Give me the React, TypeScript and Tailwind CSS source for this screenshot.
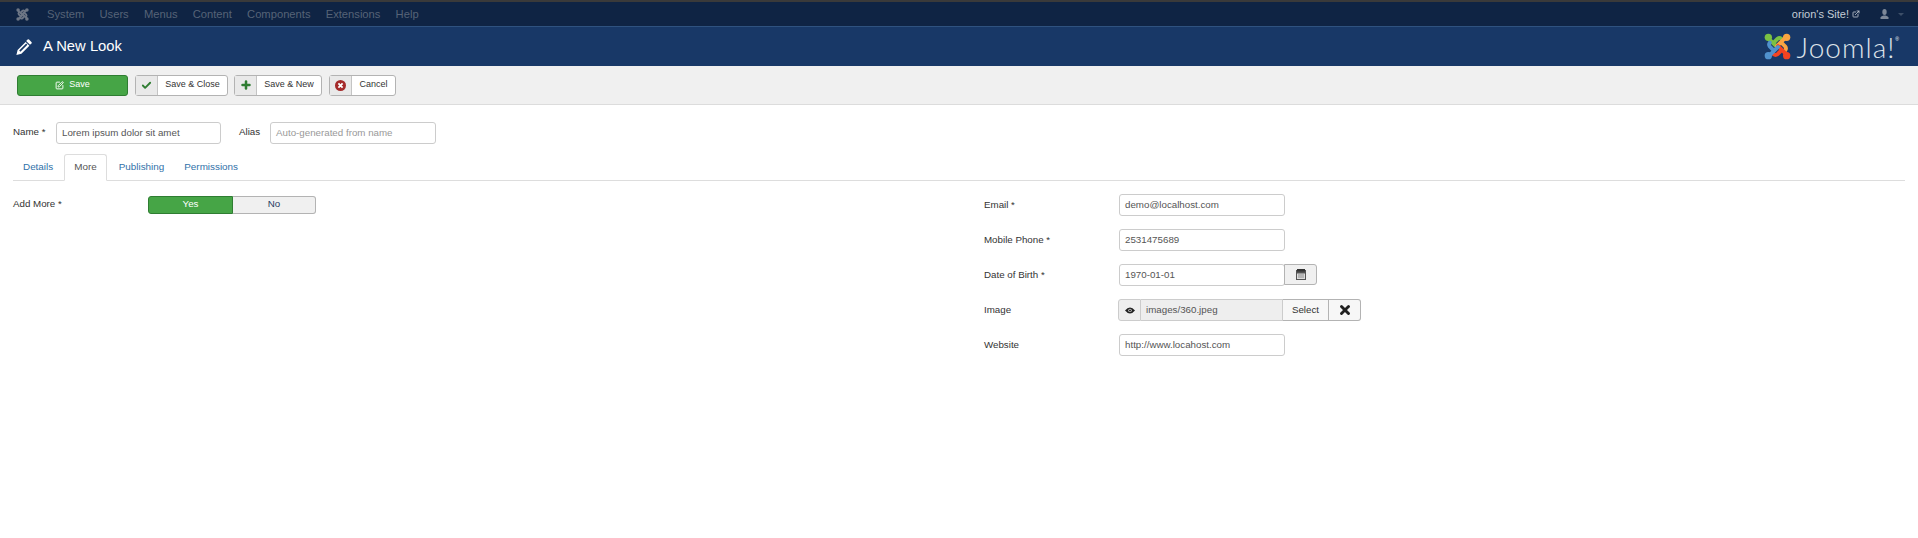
import { Check, Plus, X, SquarePen, ExternalLink } from "lucide-react"

const font = "font-['Liberation_Sans',Arial,sans-serif]"

function JoomlaMark({ colors, size }: { colors: string[]; size: number }) {
  return (
    <svg width={size} height={size} viewBox="0 0 28 28" fill="none">
      {colors.map((c, i) => (
        <g key={i} transform={`rotate(${i * 90} 14 14)`}>
          <path d="M5 6 L13.5 14.5 M9.5 10.5 L14 6 Q16 4.5 18 6" stroke={c} strokeWidth="4" strokeLinecap="round" />
          <circle cx="4.5" cy="4.5" r="3.8" fill={c} />
        </g>
      ))}
    </svg>
  )
}

function PencilIcon() {
  return (
    <svg width="16" height="16" viewBox="0 0 16 16" fill="white">
      <path d="M11.6 0.6 a1 1 0 0 1 1.4 0 l2.4 2.4 a1 1 0 0 1 0 1.4 l-1.4 1.4 -3.8 -3.8z" />
      <path d="M9.6 2.9 l3.8 3.8 -8 8 -5 1.2 1.2 -5z M3.2 11.6 L10.2 4.6 L11.4 5.8 L4.4 12.8z" fillRule="evenodd" />
    </svg>
  )
}

function CancelIcon() {
  return (
    <svg width="11" height="11" viewBox="0 0 11 11">
      <circle cx="5.5" cy="5.5" r="5.5" fill="#a52a2a" />
      <path d="M3.4 3.4 L7.6 7.6 M7.6 3.4 L3.4 7.6" stroke="white" strokeWidth="1.8" />
    </svg>
  )
}

function EyeIcon() {
  return (
    <svg width="10" height="7" viewBox="0 0 10 7">
      <path d="M0 3.5 Q5 -2.5 10 3.5 Q5 9.5 0 3.5z" fill="#222" />
      <circle cx="5" cy="3.4" r="1.7" fill="#ddd" />
      <circle cx="5" cy="3.4" r="1" fill="#222" />
    </svg>
  )
}

function CalendarIcon() {
  return (
    <svg width="10" height="11" viewBox="0 0 10 11">
      <rect x="0" y="1" width="10" height="10" fill="#555" />
      <rect x="1" y="0" width="8" height="2.5" fill="#333" />
      <path d="M1 4.5h8v5.5h-8z" fill="#ddd" />
      <path d="M2.5 5.5h1v1h-1zM4.5 5.5h1v1h-1zM6.5 5.5h1v1h-1zM2.5 7.5h1v1h-1zM4.5 7.5h1v1h-1zM6.5 7.5h1v1h-1z" fill="#444" />
    </svg>
  )
}

function UserIcon() {
  return (
    <svg width="9" height="10" viewBox="0 0 9 10" fill="#7d8898">
      <ellipse cx="4.5" cy="3" rx="2.2" ry="3" />
      <path d="M0.5 10 V8.4 Q0.5 7.4 3.4 6.4 H5.6 Q8.5 7.4 8.5 8.4 V10z" />
    </svg>
  )
}

function ToolButton({ icon, label, width }: { icon: React.ReactNode; label: string; width: string }) {
  return (
    <button className={`flex h-[21px] ${width} items-stretch rounded-[3px] border border-[#b3b3b3] bg-white text-[9px] text-[#333]`}>
      <span className="flex w-[22px] shrink-0 items-center justify-center border-r border-[#c4c4c4] bg-[#e9e9e9]">{icon}</span>
      <span className="flex flex-1 items-center justify-center">{label}</span>
    </button>
  )
}

function TextField({ value, placeholder, width = "w-[166px]" }: { value?: string; placeholder?: string; width?: string }) {
  return (
    <div className={`flex h-[22px] ${width} items-center rounded-[3px] border border-[#ccc] bg-white px-[5px] text-[9.75px] ${value ? "text-[#555]" : "text-[#999]"}`}>
      {value ?? placeholder}
    </div>
  )
}

function Row({ label, children }: { label: string; children: React.ReactNode }) {
  return (
    <div className="flex h-[22px] items-center">
      <label className="w-[135px] shrink-0 text-[9.75px] text-[#333]">{label}</label>
      {children}
    </div>
  )
}

export default function App() {
  const menus = ["System", "Users", "Menus", "Content", "Components", "Extensions", "Help"]
  const tabs = ["Details", "More", "Publishing", "Permissions"]

  return (
    <div className={`${font} h-[538px] w-full overflow-hidden bg-white`}>
      {/* top nav */}
      <nav className="flex h-[27px] items-center border-t-2 border-b border-t-[#3a3a3a] border-b-[#2f527f] bg-[#0f2444] pl-[16px] pr-[14px]">
        <JoomlaMark colors={["#6d7685", "#6d7685", "#6d7685", "#6d7685"]} size={13} />
        <ul className="ml-[18px] flex gap-[15.2px] text-[11.2px] text-[#566377]">
          {menus.map((m) => (
            <li key={m}>{m}</li>
          ))}
        </ul>
        <div className="ml-auto flex items-center text-[11px] text-[#c4ccd6]">
          orion's Site!
          <ExternalLink size={8} strokeWidth={2.4} className="ml-[3px]" />
          <span className="ml-[20px]">
            <UserIcon />
          </span>
          <span className="ml-[9px] h-0 w-0 border-x-[3px] border-t-[3px] border-x-transparent border-t-[#3d4f68]" />
        </div>
      </nav>

      {/* title bar */}
      <header className="flex h-[39px] items-center bg-[#183867] pl-[16px] pr-[19px] text-white">
        <PencilIcon />
        <h1 className="ml-[11px] text-[14.8px]">A New Look</h1>
        <div className="ml-auto flex items-center">
          <JoomlaMark colors={["#7ac143", "#f9a541", "#f44321", "#5091cd"]} size={27} />
          <span className="ml-[6px] font-['Lato',sans-serif] text-[28px] leading-none font-light tracking-[1px] text-[#dfe4ea]">Joomla!</span>
          <span className="mb-[14px] text-[5px]">®</span>
        </div>
      </header>

      {/* toolbar */}
      <div className="flex h-[39px] items-center gap-[6px] border-b border-[#dcdcdc] bg-[#f0f0f0] pl-[17px]">
        <button className="mr-px flex h-[21px] w-[111px] items-center justify-center gap-[5px] rounded-[3px] border border-[#2f7d32] bg-[#46a546] text-[9px] text-white">
          <SquarePen size={9} strokeWidth={2.5} />
          Save
        </button>
        <ToolButton width="w-[93px]" label="Save & Close" icon={<Check size={11} strokeWidth={4} className="text-[#2f7d32]" />} />
        <ToolButton width="w-[88px]" label="Save & New" icon={<Plus size={12} strokeWidth={5} className="text-[#2f7d32]" />} />
        <span className="ml-px">
          <ToolButton width="w-[67px]" label="Cancel" icon={<CancelIcon />} />
        </span>
      </div>

      {/* content */}
      <main className="px-[13px] pt-[17px]">
        <div className="flex items-center text-[9.75px] text-[#333]">
          <label className="w-[43px] -translate-y-px">Name *</label>
          <TextField value="Lorem ipsum dolor sit amet" width="w-[165px]" />
          <label className="ml-[18px] w-[31px] -translate-y-px">Alias</label>
          <TextField placeholder="Auto-generated from name" />
        </div>

        <div className="mt-[10px] flex h-[27px] border-b border-[#ddd] text-[9.9px]">
          {tabs.map((t) =>
            t === "More" ? (
              <span key={t} className="mr-[2px] ml-px flex h-[27px] items-center rounded-t-[3px] border border-b-white border-[#ddd] bg-white px-[9px] text-[#555]">
                {t}
              </span>
            ) : (
              <span key={t} className="flex items-center px-[10px] text-[#3071a9]">
                {t}
              </span>
            )
          )}
        </div>

        <div className="mt-[13px] flex">
          <div className="w-[971px] shrink-0 pt-px">
            <div className="flex h-[19px] items-center">
              <label className="w-[135px] text-[9.75px] text-[#333]">Add More *</label>
              <div className="flex h-[18px] w-[168px] text-[9.75px]">
                <span className="flex w-[85px] items-center justify-center rounded-l-[3px] border border-[#2f7d32] bg-[#46a546] text-white">Yes</span>
                <span className="flex flex-1 items-center justify-center rounded-r-[3px] border border-l-0 border-[#b3b3b3] bg-[#f0f0f0] text-[#1f3a63]">No</span>
              </div>
            </div>
          </div>

          <div className="flex flex-col gap-[13px]">
            <Row label="Email *">
              <TextField value="demo@localhost.com" />
            </Row>
            <Row label="Mobile Phone *">
              <TextField value="2531475689" />
            </Row>
            <Row label="Date of Birth *">
              <TextField value="1970-01-01" />
              <span className="-ml-px flex h-[21px] w-[33px] items-center justify-center self-start rounded-r-[3px] border border-[#b3b3b3] bg-[#f0f0f0]">
                <CalendarIcon />
              </span>
            </Row>
            <Row label="Image">
              <div className="-ml-px flex h-[22px] text-[9.75px]">
                <span className="flex w-[23px] items-center justify-center rounded-l-[3px] border border-[#ccc] bg-[#eee]">
                  <EyeIcon />
                </span>
                <span className="flex w-[142px] items-center border-y border-r border-[#ccc] bg-[#eee] px-[5px] text-[#555]">images/360.jpeg</span>
                <span className="flex w-[46px] items-center justify-center border-y border-r border-[#b3b3b3] bg-[#f7f7f7] text-[#333]">Select</span>
                <span className="flex w-[32px] items-center justify-center rounded-r-[3px] border-y border-r border-[#b3b3b3] bg-[#f7f7f7]">
                  <X size={14} strokeWidth={5} className="text-[#222]" />
                </span>
              </div>
            </Row>
            <Row label="Website">
              <TextField value="http://www.locahost.com" />
            </Row>
          </div>
        </div>
      </main>
    </div>
  )
}
